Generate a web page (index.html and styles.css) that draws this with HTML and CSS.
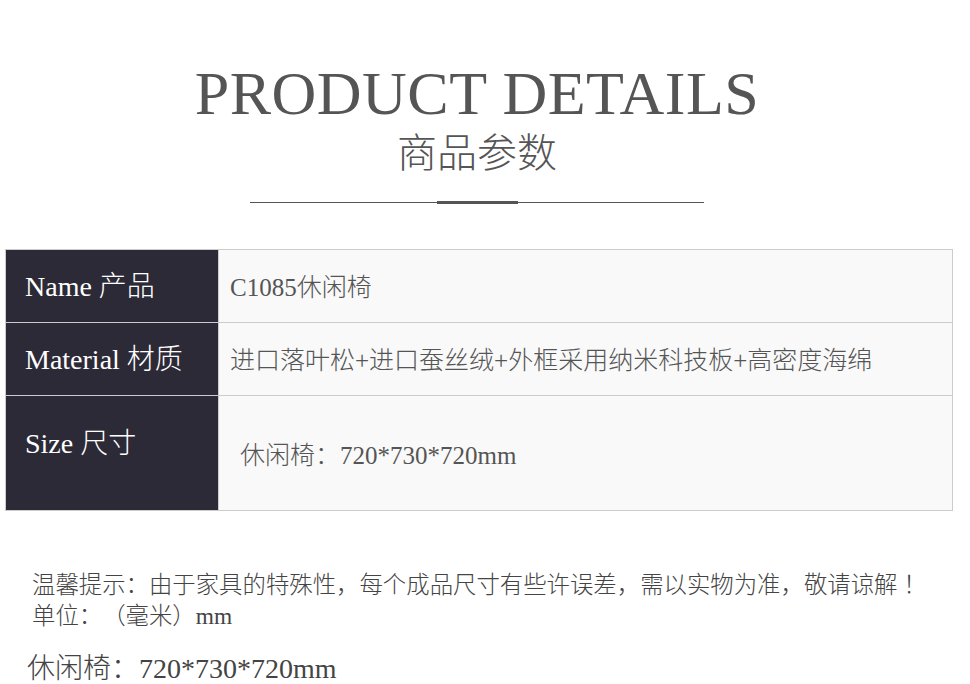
FILE: index.html
```html
<!DOCTYPE html>
<html lang="zh-CN">
<head>
    <meta charset="UTF-8">
    <meta name="viewport" content="width=device-width, initial-scale=1.0">
    <title>Product Details</title>
    <link rel="stylesheet" href="styles.css">
</head>
<body>
    <div class="page">
        <div class="header">
            <h1 class="title-en">PRODUCT DETAILS</h1>
            <h2 class="title-cn">商品参数</h2>
            <div class="divider">
                <span class="divider-line"></span>
                <span class="divider-bar"></span>
                <span class="divider-line"></span>
            </div>
        </div>

        <div class="spec-table">
            <div class="spec-label">Name 产品</div>
            <div class="spec-value">C1085休闲椅</div>

            <div class="spec-label">Material 材质</div>
            <div class="spec-value">进口落叶松+进口蚕丝绒+外框采用纳米科技板+高密度海绵</div>

            <div class="spec-label spec-label-tall">Size 尺寸</div>
            <div class="spec-value spec-value-tall">休闲椅：720*730*720mm</div>
        </div>

        <div class="notes">
            <p>温馨提示：由于家具的特殊性，每个成品尺寸有些许误差，需以实物为准，敬请谅解 ！</p>
            <p>单位：（毫米）mm</p>
        </div>

        <p class="size-line">休闲椅：720*730*720mm</p>
    </div>
</body>
</html>
```

FILE: styles.css
```css
:root {
    --dark-color: #2d2a38;
    --border-color: #cccccc;
    --cell-color: #f9f9f9;
    --text-color: #555;
}

* {
    box-sizing: border-box;
    margin: 0;
    padding: 0;
}

body {
    font-family: "Liberation Serif", "Noto Sans CJK SC", serif;
    font-weight: 300;
    text-spacing-trim: space-all;
    background-color: #fff;
    color: var(--text-color);
}

.page {
    width: 954px;
}

.header {
    display: flex;
    flex-direction: column;
    align-items: center;
    padding-top: 58px;
}

.title-en {
    font-size: 62px;
    font-weight: 300;
    line-height: 70px;
    letter-spacing: 0.5px;
    color: #555;
}

.title-cn {
    font-size: 40px;
    font-weight: 300;
    line-height: 48px;
    color: #555;
    margin-top: 2px;
}

.divider {
    display: flex;
    align-items: center;
    width: 454px;
    height: 3px;
    margin-top: 23px;
}

.divider-line {
    flex: 1;
    height: 1px;
    background-color: #555;
}

.divider-bar {
    width: 81px;
    height: 3px;
    background-color: #555;
}

.spec-table {
    display: grid;
    grid-template-columns: 212px 1fr;
    grid-template-rows: 72px 72px 114px;
    gap: 1px;
    padding: 1px;
    margin: 45px 0 0 5px;
    width: 948px;
    background-color: var(--border-color);
}

.spec-label {
    display: flex;
    align-items: center;
    padding-left: 19px;
    padding-bottom: 5px;
    background-color: var(--dark-color);
    color: #fff;
    font-size: 28px;
}

.spec-label-tall {
    padding-bottom: 24px;
}

.spec-value {
    display: flex;
    align-items: center;
    padding-left: 11px;
    padding-bottom: 3px;
    background-color: var(--cell-color);
    font-size: 25px;
}

.spec-value-tall {
    padding-left: 21px;
    padding-bottom: 0;
}

.notes {
    margin: 59px 0 0 32px;
    font-size: 23.4px;
    line-height: 31px;
    color: #444;
}

.size-line {
    margin: 20px 0 0 27px;
    font-size: 28px;
    line-height: 34px;
    color: #444;
}
```
